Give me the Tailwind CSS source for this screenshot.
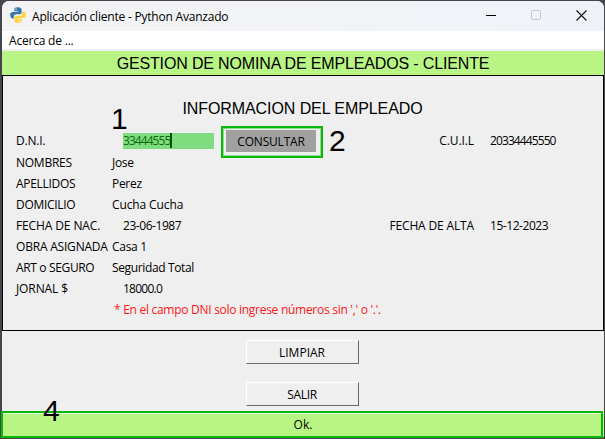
<!DOCTYPE html>
<html lang="es">
<head>
<meta charset="utf-8">
<title>Aplicación cliente - Python Avanzado</title>
<script src="https://cdn.jsdelivr.net/npm/@tailwindcss/browser@4"></script>
</head>
<body class="w-[605px] h-[439px] overflow-hidden bg-[#45454b] font-['Open_Sans','Noto_Sans',sans-serif] text-[12px] leading-[21px] text-black whitespace-nowrap">
<div class="relative w-[605px] h-[439px] pl-[2px] pr-px pt-px pb-[2px]">
  <div class="flex flex-col w-[602px] h-[436px] rounded-t-[7px] overflow-hidden bg-[#efefef]">
    <header class="flex items-center h-[30px] shrink-0 bg-linear-to-r from-[#f3f3f3] to-[#eff3f9] pl-2">
      <svg class="w-4 h-4 mr-[6px] -mt-[2px] shrink-0" viewBox="0 0 16 16">
        <path fill="#3776ab" d="M7.9.3C4.8.3 4.2 1.5 4.2 2.6v1.6h4v.7H2.5C1 4.900.200 6.200.200 8s.8 3.400 2.100 3.400h1.500V9.500c0-1.300 1-2.200 2.200-2.200h3.700c1.100 0 1.900-.8 1.900-1.900V2.600C11.600 1.200 10.300.3 7.900.3z"/>
        <path fill="#ffd343" d="M8.100 15.700c3.100 0 3.700-1.200 3.700-2.300v-1.600h-4v-.7h5.700c1.500 0 2.300-1.300 2.300-3.100s-.8-3.400-2.100-3.400h-1.500v1.900c0 1.300-1 2.200-2.200 2.200H6.300c-1.100 0-1.900.8-1.900 1.900v2.800c0 1.400 1.300 2.300 3.700 2.300z"/>
        <circle cx="6" cy="2.300" r=".7" fill="#fff"/><circle cx="10" cy="13.700" r=".7" fill="#fff"/>
      </svg>
      <span class="tracking-[-0.21px]">Aplicación cliente - Python Avanzado</span>
      <div class="flex items-center ml-auto pr-[17px] gap-[35px] -mt-[2px]">
        <svg class="w-[10px] h-[10px]" viewBox="0 0 10 10"><path d="M0 5.500h10" stroke="#000"/></svg>
        <svg class="w-[10px] h-[10px]" viewBox="0 0 10 10"><rect x=".5" y=".5" width="9" height="9" rx=".8" fill="none" stroke="#c3c5c9"/></svg>
        <svg class="w-[11px] h-[11px]" viewBox="0 0 11 11"><path d="M.5.5l10 10M10.500.5l-10 10" stroke="#111" stroke-width="1.100"/></svg>
      </div>
    </header>
    <nav class="h-[18px] shrink-0 bg-white pl-[7px] leading-[20px]"><span class="tracking-[-0.2px]">Acerca de ...</span></nav>
    <h1 class="mt-[2px] h-6 shrink-0 bg-[#b9f584] text-center font-['Liberation_Sans',Arial,sans-serif] text-[16px] leading-[25px] tracking-[-0.15px]">GESTION DE NOMINA DE EMPLEADOS - CLIENTE</h1>
    <main class="h-[256px] shrink-0 border border-black pl-[13px] flex flex-col">
      <h2 class="h-[54px] pt-[22px] pr-[14px] text-center font-['Liberation_Sans',Arial,sans-serif] text-[16px] leading-[21px] tracking-[-0.08px]">INFORMACION DEL EMPLEADO</h2>
      <div class="flex h-[22px]">
        <span class="w-[107px]"><span class="tracking-[-0.2px]">D.N.I.</span></span>
        <span class="w-[91px] h-4 mt-[3px] bg-[#7edd7e] text-[#0d6b0d] leading-[15px] flex"><span class="tracking-[-0.95px]">33444555</span><i class="w-[2px] h-[15px] bg-[#064d06]"></i></span>
        <button class="ml-3 w-[90px] h-[22px] bg-[#a0a0a0] leading-[21px]"><span class="tracking-[-0.2px]">CONSULTAR</span></button>
        <span class="w-[158px] text-right"><span class="tracking-[-0.1px]">C.U.I.L</span></span>
        <span class="ml-4"><span class="tracking-[-0.9px]">20334445550</span></span>
      </div>
      <div class="flex h-[21px]"><span class="w-24"><span class="tracking-[-0.25px]">NOMBRES</span></span><span class="tracking-[-0.3px]">Jose</span></div>
      <div class="flex h-[21px]"><span class="w-24"><span class="tracking-[-0.3px]">APELLIDOS</span></span><span class="tracking-[-0.3px]">Perez</span></div>
      <div class="flex h-[21px]"><span class="w-24"><span class="tracking-[-0.3px]">DOMICILIO</span></span><span class="tracking-[-0.12px]">Cucha Cucha</span></div>
      <div class="flex h-[21px]">
        <span class="w-[107px]"><span class="tracking-[-0.12px]">FECHA DE NAC.</span></span><span class="w-[80px]"><span class="tracking-[-0.45px]">23-06-1987</span></span>
        <span class="w-[271px] text-right"><span class="tracking-[-0.15px]">FECHA DE ALTA</span></span>
        <span class="ml-4"><span class="tracking-[-0.45px]">15-12-2023</span></span>
      </div>
      <div class="flex h-[21px]"><span class="w-24"><span class="tracking-[-0.2px]">OBRA ASIGNADA</span></span><span class="tracking-[-0.3px]">Casa 1</span></div>
      <div class="flex h-[21px]"><span class="w-24"><span class="tracking-[-0.35px]">ART o SEGURO</span></span><span class="tracking-[-0.37px]">Seguridad Total</span></div>
      <div class="flex h-[21px]"><span class="w-[107px]"><span class="tracking-[-0.1px]">JORNAL $</span></span><span class="tracking-[-0.75px]">18000.0</span></div>
      <p class="pl-[98px] h-[21px] text-[#ff1616]"><span class="tracking-[-0.28px]">* En el campo DNI solo ingrese números sin ',' o '.'.</span></p>
    </main>
    <div class="flex flex-col items-center gap-[18px] pt-[9px] pr-[2px]">
      <button class="w-[113px] h-6 border border-t-white border-l-white border-r-[#696969] border-b-[#696969]"><span class="tracking-[0px]">LIMPIAR</span></button>
      <button class="w-[113px] h-6 border border-t-white border-l-white border-r-[#696969] border-b-[#696969]"><span class="tracking-[-0.3px]">SALIR</span></button>
    </div>
    <footer class="mt-[8px] h-6 shrink-0 bg-[#b9f584] text-center leading-[22px]">Ok.</footer>
  </div>
  <div class="absolute left-[221px] top-[126px] w-[102px] h-8 border-2 border-[#0ab80a] outline outline-[#0ab80a]/40 -outline-offset-3"></div>
  <div class="absolute left-[1px] top-[411px] w-[602px] h-[27px] border-2 border-[#0ab80a] shadow-[inset_0_1px_0_#e8f8e0]"></div>
  <span class="absolute left-[111px] top-[104px] font-['Liberation_Sans',Arial,sans-serif] text-[30px] leading-[30px]">1</span>
  <span class="absolute left-[329px] top-[126px] font-['Liberation_Sans',Arial,sans-serif] text-[30px] leading-[30px]">2</span>
  <span class="absolute left-[43px] top-[396px] font-['Liberation_Sans',Arial,sans-serif] text-[30px] leading-[30px]">4</span>
</div>
</body>
</html>
